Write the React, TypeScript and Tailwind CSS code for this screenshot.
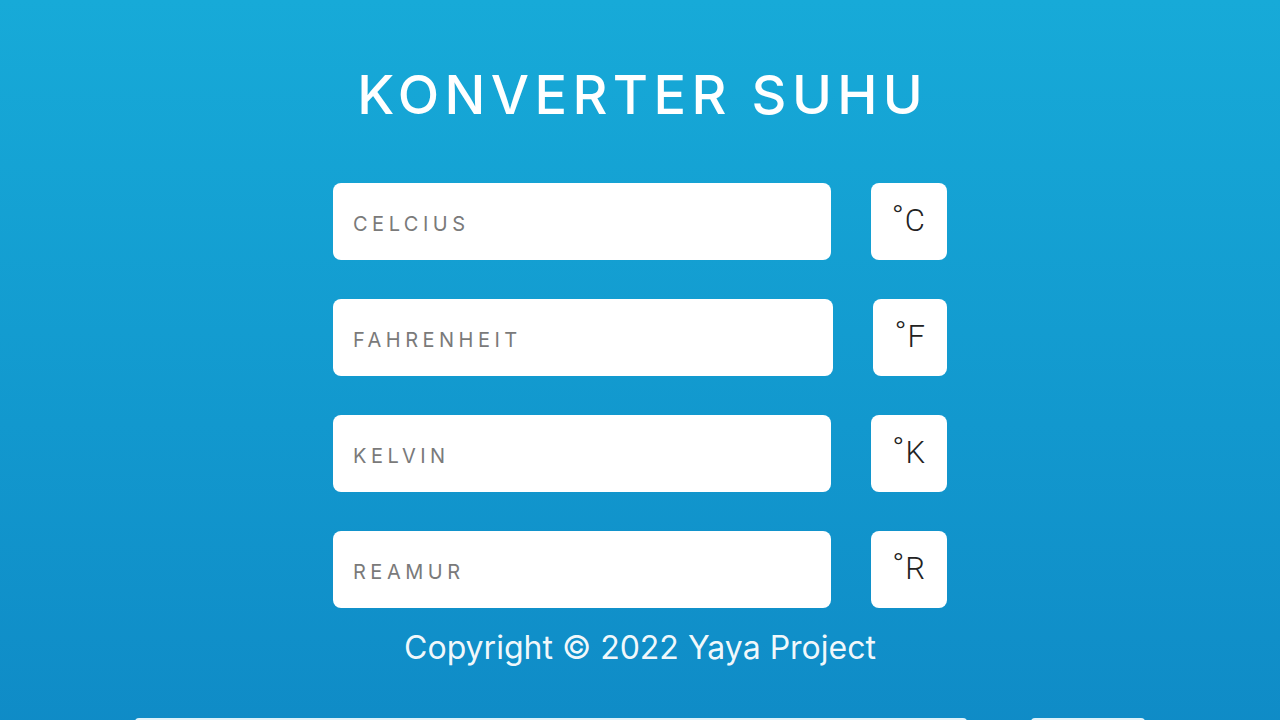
import { useState } from "react";

const units = [
  { key: "c", label: "CELCIUS", symbol: "C" },
  { key: "f", label: "FAHRENHEIT", symbol: "F" },
  { key: "k", label: "KELVIN", symbol: "K" },
  { key: "r", label: "REAMUR", symbol: "R" },
];

export default function App() {
  const [values, setValues] = useState<Record<string, string>>({});

  return (
    <div
      className="min-h-screen w-full overflow-hidden bg-gradient-to-b from-[#17aad8] to-[#0f8ac6] flex flex-col items-center"
      style={{ fontFamily: "Inter, Roboto, 'Noto Sans', sans-serif" }}
    >
      <h1 className="mt-[64px] pl-[0.1em] text-[54px] leading-[62px] font-medium tracking-[0.1em] text-white">
        KONVERTER SUHU
      </h1>

      <div className="mt-[57px] w-[614px] flex flex-col gap-[39px]">
        {units.map((u) => (
          <div key={u.key} className="flex items-stretch gap-10 h-[77px]">
            <input
              type="text"
              value={values[u.key] ?? ""}
              onChange={(e) => setValues({ ...values, [u.key]: e.target.value })}
              placeholder={u.label}
              className="flex-1 min-w-0 rounded-lg bg-white px-5 pt-1 text-[20px] tracking-[4.5px] text-gray-700 placeholder:text-[#7a7a7a] outline-none"
            />
            <div
              className="flex items-center rounded-lg bg-white pl-[21px] pr-[22px] text-[31px] font-light text-[#222]"
              style={{ fontFamily: "Roboto, sans-serif" }}
            >
              <span className="text-[32px] leading-none -mt-[12px] mr-[1px]">°</span>
              {u.symbol}
            </div>
          </div>
        ))}
      </div>

      <p className="mt-[18px] text-[32px] leading-[44px] text-white/95">
        Copyright © 2022 Yaya Project
      </p>

      {/* next section, cut off at the bottom of the window */}
      <div className="mt-[48px] w-full flex gap-16 pl-[135px]">
        <div className="h-10 w-[832px] rounded-sm bg-[#dff2fa]" />
        <div className="h-10 w-[114px] rounded-sm bg-[#dff2fa]" />
      </div>
    </div>
  );
}
